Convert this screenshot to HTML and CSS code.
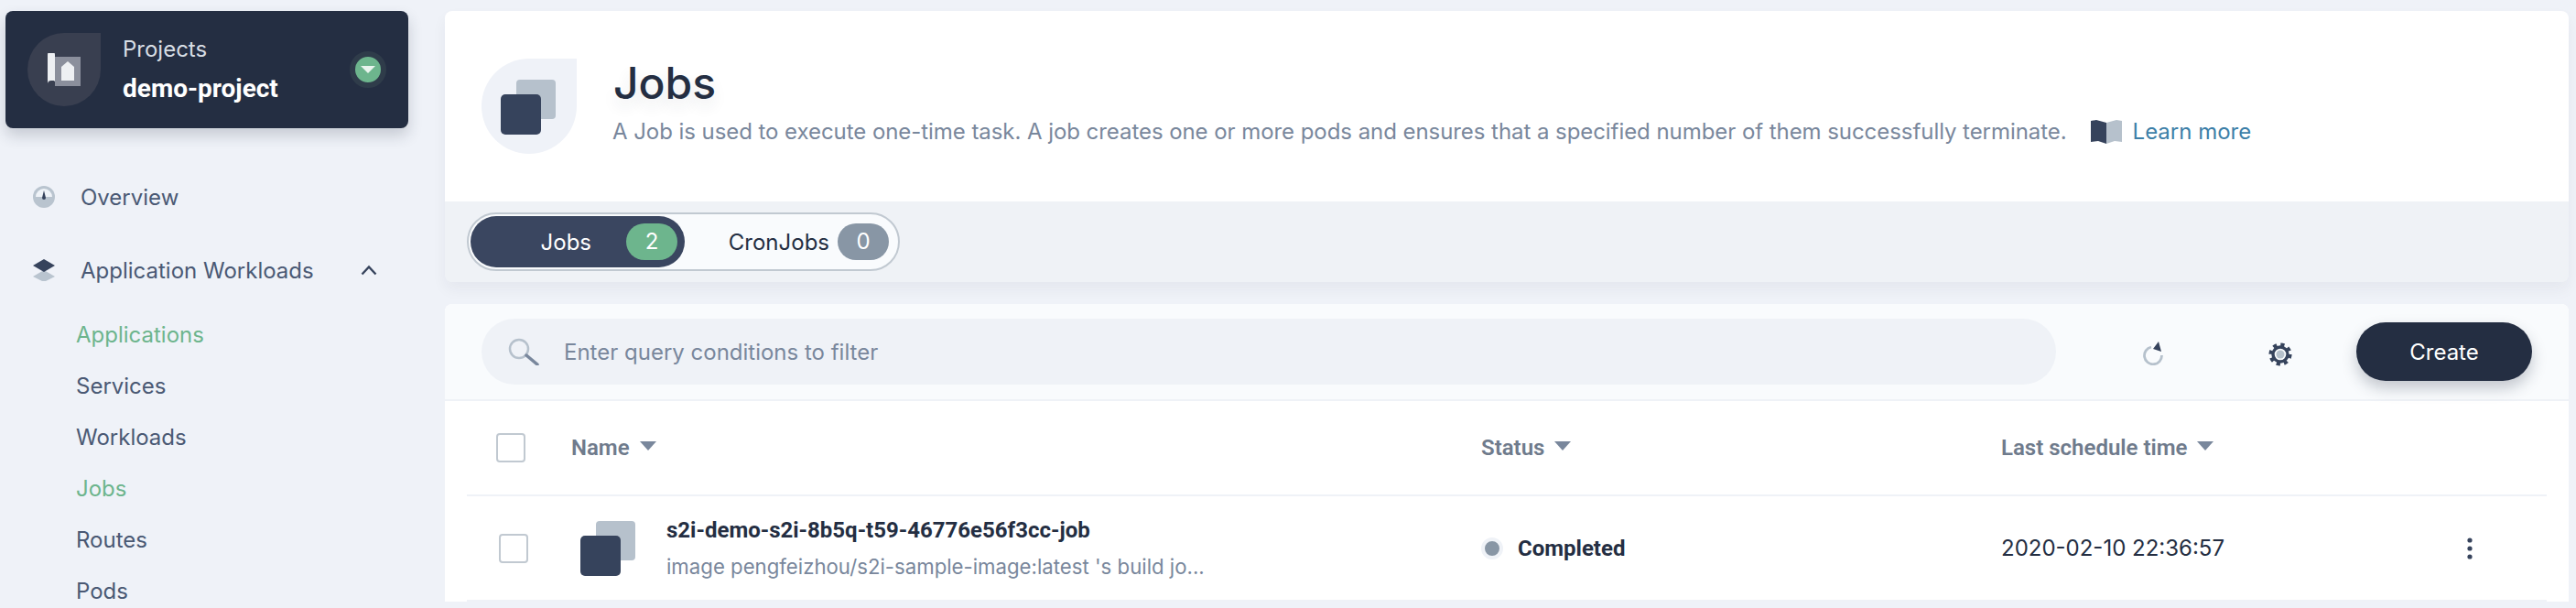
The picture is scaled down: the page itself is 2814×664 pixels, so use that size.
FILE: index.html
```html
<!DOCTYPE html>
<html><head>
<meta charset="utf-8"><title>Jobs</title>
<link rel="stylesheet" href="styles.css">
</head>
<body>
<div class="sidebar">
  <div class="project">
    <div class="project-icon">
      <svg width="36" height="36" viewBox="0 0 36 36"><path d="M8 6h28v32H8z" fill="#8b8f9c" transform="translate(0 -2)"/><path d="M0 4a4 4 0 0 1 8 0v28H4a4 4 0 0 0-4 0z" fill="#eef0f3" transform="translate(0 -2)"/><path d="M0 31a4 4 0 0 1 8 0 4 4 0 0 0-4-1 4 4 0 0 0-4 3z" fill="#eef0f3"/><path d="M15 32V17l7-6 7 6v15z" fill="#eef0f3" transform="translate(0 -2)"/></svg>
    </div>
    <div class="project-text">
      <div class="project-label">Projects</div>
      <div class="project-name">demo-project</div>
    </div>
    <div class="project-toggle"><span class="project-caret"></span></div>
  </div>
  <ul class="nav">
    <li class="nav-item">
      <svg class="nav-icon" width="24" height="24" viewBox="0 0 24 24"><circle cx="12" cy="12" r="12" fill="#b9c4cf"/><path d="M3 12a9 9 0 0 1 18 0z" fill="#eff3f8"/><path d="M12 5l2 8a2 2 0 0 1-4 0z" fill="#36435c"/></svg>
      <span>Overview</span>
    </li>
    <li class="nav-item nav-group">
      <svg class="nav-icon" width="24" height="24" viewBox="0 0 24 24"><path d="M12 12l12 7-12 6-12-6z" fill="#b9c4cf"/><path d="M12 0l12 7-12 7-12-7z" fill="#36435c"/></svg>
      <span>Application Workloads</span>
      <svg class="nav-chevron" width="18" height="12" viewBox="0 0 18 12"><path d="M1.5 10.5L9 2.500l7.500 8" fill="none" stroke="#36435c" stroke-width="2.400"/></svg>
    </li>
  </ul>
  <ul class="subnav">
    <li class="active">Applications</li>
    <li>Services</li>
    <li>Workloads</li>
    <li class="active">Jobs</li>
    <li>Routes</li>
    <li>Pods</li>
  </ul>
</div>

<div class="main">
  <div class="banner">
    <div class="banner-top">
      <div class="banner-icon">
        <svg width="60" height="60" viewBox="0 0 60 60"><rect x="17" y="0" width="43" height="43" rx="4" fill="#b6c1cc"/><rect x="0" y="16" width="44" height="44" rx="5" fill="#36435c"/></svg>
      </div>
      <div class="banner-text">
        <h1>Jobs</h1>
        <p>A Job is used to execute one-time task. A job creates one or more pods and ensures that a specified number of them successfully terminate.
          <span class="learn">
            <svg width="34" height="26" viewBox="0 0 34 26"><path d="M0 1l6-1 11 3v23L8 23l-8 1z" fill="#36435c"/><path d="M17 3l11-3 6 1v23l-8-1-9 3z" fill="#b6c1cc"/></svg>
            <a href="#">Learn more</a>
          </span>
        </p>
      </div>
    </div>
    <div class="tabs-band">
      <div class="tabs">
        <div class="tab tab-on"><span>Jobs</span><b class="badge badge-green">2</b></div>
        <div class="tab"><span>CronJobs</span><b class="badge badge-grey">0</b></div>
      </div>
    </div>
  </div>

  <div class="panel">
    <div class="toolbar">
      <div class="search">
        <svg width="34" height="30" viewBox="0 0 34 30"><circle cx="12" cy="12" r="10" fill="none" stroke="#b6c1cc" stroke-width="2.500"/><path d="M20 19l12 10" stroke="#79879c" stroke-width="3.500" stroke-linecap="round"/></svg>
        <span>Enter query conditions to filter</span>
      </div>
      <svg class="refresh" width="24" height="26" viewBox="0 0 24 26"><path d="M9 6A9.500 9.500 0 1 0 20.500 15" fill="none" stroke="#b6c1cc" stroke-width="2.800"/><path d="M17 0l3 11-9-3z" fill="#36435c"/></svg>
      <svg class="gear" width="26" height="26" viewBox="0 0 26 26"><circle cx="13" cy="13" r="10.800" fill="none" stroke="#36435c" stroke-width="3.600" stroke-dasharray="4.240 4.240"/><circle cx="13" cy="13" r="8" fill="#f9fbfd" stroke="#36435c" stroke-width="3.400"/><circle cx="13" cy="13" r="4.500" fill="#b6c1cc"/></svg>
      <button class="create">Create</button>
    </div>
    <div class="table">
      <div class="row row-head">
        <span class="check"></span>
        <span class="head">Name<i class="sort"></i></span>
        <span class="head">Status<i class="sort"></i></span>
        <span class="head">Last schedule time<i class="sort"></i></span>
      </div>
      <div class="row row-body">
        <span class="check check-row"></span>
        <div class="job">
          <svg width="60" height="60" viewBox="0 0 60 60"><rect x="17" y="0" width="43" height="43" rx="4" fill="#b6c1cc"/><rect x="0" y="16" width="44" height="44" rx="5" fill="#36435c"/></svg>
          <div>
            <div class="job-name">s2i-demo-s2i-8b5q-t59-46776e56f3cc-job</div>
            <div class="job-desc">image pengfeizhou/s2i-sample-image:latest 's build jo...</div>
          </div>
        </div>
        <div class="status"><i class="dot"></i>Completed</div>
        <div class="time">2020-02-10 22:36:57</div>
        <svg class="more" width="6" height="24" viewBox="0 0 6 24"><circle cx="3" cy="3" r="2.600" fill="#36435c"/><circle cx="3" cy="12" r="2.600" fill="#36435c"/><circle cx="3" cy="21" r="2.600" fill="#36435c"/></svg>
      </div>
    </div>
  </div>
</div>
</body></html>
```

FILE: styles.css
```css
html, body {
  margin: 0;
  height: 664px;
  overflow: hidden;
}
body {
  display: flex;
  background-color: #eff2f8;
  font-family: Inter, "Open Sans", sans-serif;
  font-size: 24px;
  color: #242e42;
}
ul {
  list-style: none;
  margin: 0;
  padding: 0;
}

/* sidebar */
.sidebar {
  width: 440px;
  margin: 12px 40px 0 6px;
  flex: none;
}
.project {
  height: 128px;
  display: flex;
  align-items: center;
  padding: 0 24px;
  box-sizing: border-box;
  background-color: #242e42;
  border-radius: 8px;
  box-shadow: 0 8px 16px rgba(36, 46, 66, 0.2);
}
.project-icon {
  width: 80px;
  height: 80px;
  border-radius: 50% 0 50% 50%;
  background-color: #393f50;
  display: flex;
  align-items: center;
  justify-content: center;
  margin-right: 24px;
  flex: none;
}
.project-text {
  flex: 1;
  padding-top: 2px;
}
.project-label {
  color: #d8dee5;
  font-size: 24px;
  line-height: 34px;
}
.project-name {
  font-family: Roboto, sans-serif;
  font-weight: 700;
  font-size: 28px;
  line-height: 40px;
  margin-top: 6px;
  color: #fff;
}
.project-toggle {
  width: 28px;
  height: 28px;
  border-radius: 50%;
  background-color: #6db58d;
  border: 6px solid #2f3c4a;
  display: flex;
  align-items: center;
  justify-content: center;
}
.project-caret {
  border-left: 8px solid transparent;
  border-right: 8px solid transparent;
  border-top: 8px solid #e9f4ee;
}
.nav {
  margin-top: 52px;
}
.nav-item {
  display: flex;
  align-items: center;
  height: 46px;
  padding-left: 30px;
  color: #4a5974;
}
.nav-group {
  margin-top: 34px;
}
.nav-icon {
  margin-right: 28px;
}
.nav-chevron {
  margin-left: 51px;
}
.subnav {
  margin-top: 20px;
  padding-left: 77px;
  color: #4a5974;
}
.subnav li {
  height: 56px;
  line-height: 56px;
}
.subnav .active {
  color: #6db58d;
}

/* main column */
.main {
  width: 2320px;
  flex: none;
  padding-top: 12px;
}
.banner {
  border-radius: 8px;
  box-shadow: 0 8px 16px rgba(36, 46, 66, 0.05);
  overflow: hidden;
}
.banner-top {
  height: 208px;
  background-color: #fff;
  display: flex;
  align-items: center;
  padding-left: 40px;
  box-sizing: border-box;
}
.banner-icon {
  width: 104px;
  height: 104px;
  border-radius: 50% 0 50% 50%;
  background-color: #eff2f8;
  display: flex;
  align-items: center;
  justify-content: center;
  margin-right: 40px;
  flex: none;
}
.banner-icon svg {
  margin: 0 0 -2px -2px;
}
.banner-text {
  padding-bottom: 12px;
}
h1 {
  margin: 0;
  font-size: 48px;
  line-height: 64px;
  font-weight: 500;
  text-shadow: 0 8px 16px rgba(36, 46, 66, 0.1);
}
.banner-text p {
  margin: 4px 0 0 -1px;
  color: #79879c;
  line-height: 34px;
  display: flex;
  align-items: center;
  white-space: nowrap;
  letter-spacing: -0.06px;
}
.learn {
  display: inline-flex;
  align-items: center;
  margin-left: 26px;
  letter-spacing: 0;
}
.learn svg {
  margin-right: 12px;
}
.learn a {
  color: #3d7fa8;
  text-decoration: none;
}
.tabs-band {
  height: 88px;
  background-color: #eff2f6;
  padding: 12px 0 0 24px;
  box-sizing: border-box;
}
.tabs {
  width: 473px;
  height: 64px;
  box-sizing: border-box;
  display: flex;
  padding: 2px;
  border: 2px solid #c1c9d1;
  border-radius: 32px;
  background-color: #f9fbfd;
}
.tab {
  height: 56px;
  display: flex;
  align-items: center;
  justify-content: flex-end;
  padding-right: 8px;
  border-radius: 28px;
  width: 234px;
  box-sizing: border-box;
}
.tab + .tab {
  width: 231px;
}
.tab-on {
  background-color: #3a4660;
  color: #fff;
}
.tab span {
  margin-right: 9px;
}
.tab-on span {
  margin-right: 38px;
}
.badge {
  width: 56px;
  height: 40px;
  border-radius: 20px;
  color: #fff;
  font-weight: 400;
  text-align: center;
  line-height: 40px;
}
.badge-green {
  background-color: #6db58d;
}
.badge-grey {
  background-color: #8896a5;
}

/* table panel */
.panel {
  margin-top: 24px;
  background-color: #fff;
  border-radius: 8px 8px 0 0;
  overflow: hidden;
}
.toolbar {
  height: 104px;
  background-color: #f9fbfd;
  border-bottom: 2px solid #eff2f7;
  display: flex;
  align-items: center;
  padding-left: 40px;
}
.search {
  width: 1720px;
  height: 72px;
  border-radius: 36px;
  background-color: #eff2f7;
  display: flex;
  align-items: center;
  padding-left: 29px;
  box-sizing: border-box;
  color: #79879c;
}
.search svg {
  margin-right: 27px;
}
.refresh {
  margin: 4px 0 0 95px;
}
.gear {
  margin: 6px 0 0 113px;
}
.create {
  margin-left: 70px;
  width: 192px;
  height: 64px;
  border: 0;
  border-radius: 32px;
  background-color: #242e42;
  color: #fff;
  font: inherit;
  box-shadow: 0 8px 16px rgba(36, 46, 66, 0.25);
}
.table {
  margin: 0 24px;
}
.row {
  display: grid;
  grid-template-columns: 82px 994px 568px 509px 1fr;
  align-items: center;
  padding-left: 32px;
  border-bottom: 2px solid #eff2f7;
}
.row-head {
  height: 102px;
}
.row-body {
  height: 113px;
}
.check {
  width: 32px;
  height: 32px;
  box-sizing: border-box;
  border: 2px solid #c1c9d1;
  border-radius: 4px;
  background-color: #fff;
}
.check-row {
  margin: 0 0 0 3px;
}
.head {
  font-family: Roboto, sans-serif;
  font-weight: 600;
  color: #6f7b8c;
  display: flex;
  align-items: center;
}
.sort {
  margin: -4px 0 0 11px;
  border-left: 9px solid transparent;
  border-right: 9px solid transparent;
  border-top: 10px solid #79879c;
}
.job {
  display: flex;
  align-items: center;
  padding-left: 10px;
}
.job svg {
  margin-right: 34px;
  flex: none;
}
.job-name {
  font-family: Roboto, sans-serif;
  font-weight: 700;
  line-height: 34px;
}
.job-desc {
  color: #79879c;
  font-size: 22.2px;
  line-height: 34px;
  margin-top: 6px;
  white-space: nowrap;
}
.status {
  font-family: Roboto, sans-serif;
  font-weight: 700;
  display: flex;
  align-items: center;
}
.dot {
  width: 16px;
  height: 16px;
  background-color: #8896a5;
  border: 4px solid #eff2f7;
  border-radius: 50%;
  margin-right: 16px;
}
```
